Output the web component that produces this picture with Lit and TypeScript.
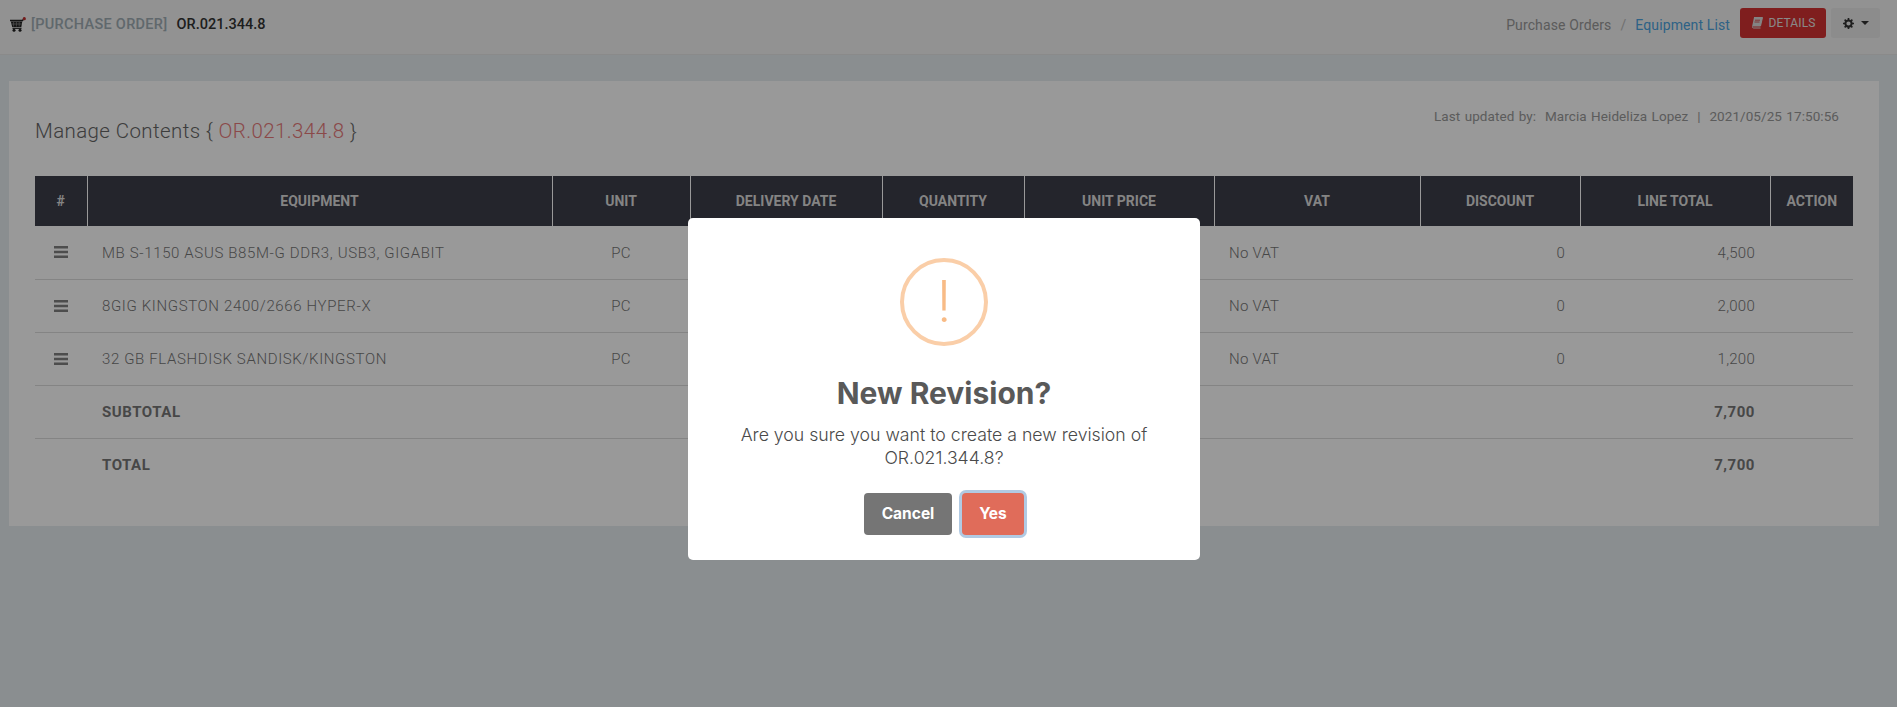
import { LitElement, html, css } from "lit";
import { customElement } from "lit/decorators.js";

const rows = [
  { name: "MB S-1150 ASUS B85M-G DDR3, USB3, GIGABIT", total: "4,500" },
  { name: "8GIG KINGSTON 2400/2666 HYPER-X", total: "2,000" },
  { name: "32 GB FLASHDISK SANDISK/KINGSTON", total: "1,200" },
];
const heads = ["#", "EQUIPMENT", "UNIT", "DELIVERY DATE", "QUANTITY", "UNIT PRICE", "VAT", "DISCOUNT", "LINE TOTAL", "ACTION"];
const widths = [52, 465, 138, 192, 142, 190, 206, 160, 190, 83];

@customElement("app-root")
export class AppRoot extends LitElement {
  static styles = css`
    :host { display: block; height: 707px; position: relative; overflow: hidden; background: #e7edf1; font-family: "Roboto", "Liberation Sans", sans-serif; color: #777; }
    .top { height: 55px; box-sizing: border-box; background: #f3f3f3; border-bottom: 1px solid #e6e6e6; display: flex; align-items: flex-start; justify-content: space-between; padding: 8px 17px 0 10px; }
    .title { display: flex; align-items: center; height: 32px; font-size: 14.5px; font-weight: 500; }
    .title svg { margin-right: 5px; margin-top: 1px; }
    .po { color: #a0adb5; letter-spacing: .3px; }
    .code { color: #333; margin-left: 9px; letter-spacing: 0; }
    .tools { display: flex; align-items: flex-start; }
    .crumbs { display: flex; align-items: center; height: 33px; font-size: 14px; color: #999; letter-spacing: .12px; margin-right: 10px; }
    .sep { margin: 0 9px; color: #bbb; }
    .link { color: #4da3e0; }
    .btn { height: 30px; box-sizing: border-box; border-radius: 3px; display: flex; align-items: center; justify-content: center; }
    .details { width: 86px; background: #d43232; color: #e4e4e4; font-size: 12px; gap: 6px; letter-spacing: .1px; }
    .gear { width: 49px; background: #e9e9e9; margin-left: 5px; gap: 7px; }
    .caret { width: 0; height: 0; border-left: 4px solid transparent; border-right: 4px solid transparent; border-top: 4px solid #333; }
    .card { margin: 26px 18px 0 9px; background: #fff; box-sizing: border-box; height: 445px; padding: 0 26px; }
    .card-head { height: 95px; display: flex; justify-content: space-between; align-items: flex-start; }
    h3 { margin: 38px 0 0; font-size: 20.500px; line-height: 24px; font-weight: 300; color: #666; letter-spacing: .4px; }
    h3 span { color: #e87a7a; }
    .updated { margin: 26px 14px 0 0; font-size: 13.500px; line-height: 18px; color: #999; letter-spacing: .07px; word-spacing: 1px; }
    table { border-collapse: collapse; table-layout: fixed; width: 1818px; font-size: 15px; letter-spacing: .25px; }
    th { height: 50px; padding: 0; background: #3c3e4a; color: #dcdcdc; font-size: 14px; font-weight: 700; letter-spacing: 0; border-left: 1px solid #fff; box-sizing: border-box; }
    th:first-child { border-left: 0; }
    td { height: 53px; padding: 0 15px; box-sizing: border-box; border-top: 1px solid #dcdcdc; color: #777; font-weight: 300; }
    tbody tr:first-child td { border-top: 0; height: 53px; padding-top: 2px; }
    .c { text-align: center; }
    .r { text-align: right; }
    .name { letter-spacing: .64px; }
    .b { font-weight: 700; color: #777; letter-spacing: .55px; }
    .grip { display: block; margin: 0 auto; }
    .overlay { position: absolute; inset: 0; background: rgba(0, 0, 0, .4); display: flex; justify-content: center; align-items: flex-start; padding: 218px 9px 0 0; box-sizing: border-box; }
    .modal { width: 512px; height: 342px; box-sizing: border-box; background: #fff; border-radius: 5px; padding-top: 40px; display: flex; flex-direction: column; align-items: center; color: #545454; font-family: "Inter", "Roboto", sans-serif; }
    .icon { width: 88px; height: 88px; box-sizing: border-box; border: 4px solid #facea8; border-radius: 50%; color: #f8bb86; font-family: "Roboto", sans-serif; font-weight: 300; font-size: 60px; line-height: 80px; text-align: center; }
    h2 { margin: 28px 0 0; font-size: 30px; line-height: 38px; font-weight: 700; color: #595959; }
    p { margin: 12px 0 0; width: 424px; font-size: 17.700px; line-height: 22.500px; text-align: center; font-weight: 300; color: #4a4a4a; }
    .actions { display: flex; margin-top: 24px; gap: 10px; }
    .act { height: 42px; box-sizing: border-box; padding-bottom: 1px; border-radius: 4px; color: #fff; font-size: 15.500px; font-weight: 700; display: flex; align-items: center; justify-content: center; }
    .cancel { width: 88px; background: #757575; }
    .yes { width: 62px; background: #e06c5a; box-shadow: 0 0 0 3px rgba(100, 150, 200, .5); }
  `;

  render() {
    return html`
      <div class="top">
        <div class="title">
          <svg width="16" height="15" viewBox="0 0 16 15"><path d="M0 3.500h12.500l2-2.500" fill="none" stroke="#222" stroke-width="1.300"/><path d="M.8 4.500h11.500l-1 5.500H2.200z" fill="#222"/><path d="M3.600 5v4.500M6.400 5v4.500M9.200 5v4.500M1.500 7h10" stroke="#8c8c8c" stroke-width=".7"/><path d="M2.500 11.300h9" stroke="#222" stroke-width="1.200"/><circle cx="4" cy="13.300" r="1.500" fill="#222"/><circle cx="10" cy="13.300" r="1.500" fill="#222"/><circle cx="14.300" cy="1.700" r="1.600" fill="#c03030"/></svg>
          <span class="po">[PURCHASE ORDER]</span><span class="code">OR.021.344.8</span>
        </div>
        <div class="tools">
          <div class="crumbs"><span>Purchase Orders</span><span class="sep">/</span><span class="link">Equipment List</span></div>
          <div class="btn details">
            <svg width="12" height="12" viewBox="0 0 12 12"><path d="M3 .5h8.500l-2 8.500H2.500q-1 0-1 1t1 1h7" fill="none" stroke="#ddd" stroke-width="1"/><path d="M3 .5h8.500l-2 8.500H1.200z" fill="#ddd"/><path d="M4 3.200h5M3.500 5h5" stroke="#d43232" stroke-width=".8"/></svg>
            <span>DETAILS</span>
          </div>
          <div class="btn gear">
            <svg width="11" height="11" viewBox="0 0 12 12"><circle cx="6" cy="6" r="3.400" fill="none" stroke="#333" stroke-width="2.200"/><path d="M6 0v2.500M6 9.500V12M0 6h2.500M9.500 6H12M1.800 1.800l1.800 1.800M8.400 8.400l1.800 1.800M10.200 1.800 8.400 3.600M3.600 8.400l-1.800 1.800" stroke="#333" stroke-width="1.800"/></svg>
            <span class="caret"></span>
          </div>
        </div>
      </div>
      <div class="card">
        <div class="card-head">
          <h3>Manage Contents { <span>OR.021.344.8</span> }</h3>
          <div class="updated">Last updated by: &nbsp;Marcia Heideliza Lopez &nbsp;|&nbsp; 2021/05/25 17:50:56</div>
        </div>
        <table>
          <colgroup>${widths.map((w) => html`<col style="width:${w}px" />`)}</colgroup>
          <thead><tr>${heads.map((h) => html`<th>${h}</th>`)}</tr></thead>
          <tbody>
            ${rows.map((r) => html`<tr>
              <td class="c" style="padding:0"><svg class="grip" width="14" height="12" viewBox="0 0 14 12"><path d="M0 1.200h14M0 6h14M0 10.800h14" stroke="#808080" stroke-width="2.400"/></svg></td>
              <td class="name">${r.name}</td>
              <td class="c">PC</td><td></td><td></td><td></td>
              <td>No VAT</td>
              <td class="r">0</td>
              <td class="r">${r.total}</td>
              <td></td>
            </tr>`)}
            ${["SUBTOTAL", "TOTAL"].map((l) => html`<tr>
              <td></td><td class="b">${l}</td><td></td><td></td><td></td><td></td><td></td><td></td>
              <td class="r b">7,700</td><td></td>
            </tr>`)}
          </tbody>
        </table>
      </div>
      <div class="overlay">
        <div class="modal">
          <div class="icon">!</div>
          <h2>New Revision?</h2>
          <p>Are you sure you want to create a new revision of OR.021.344.8?</p>
          <div class="actions"><div class="act cancel">Cancel</div><div class="act yes">Yes</div></div>
        </div>
      </div>
    `;
  }
}
